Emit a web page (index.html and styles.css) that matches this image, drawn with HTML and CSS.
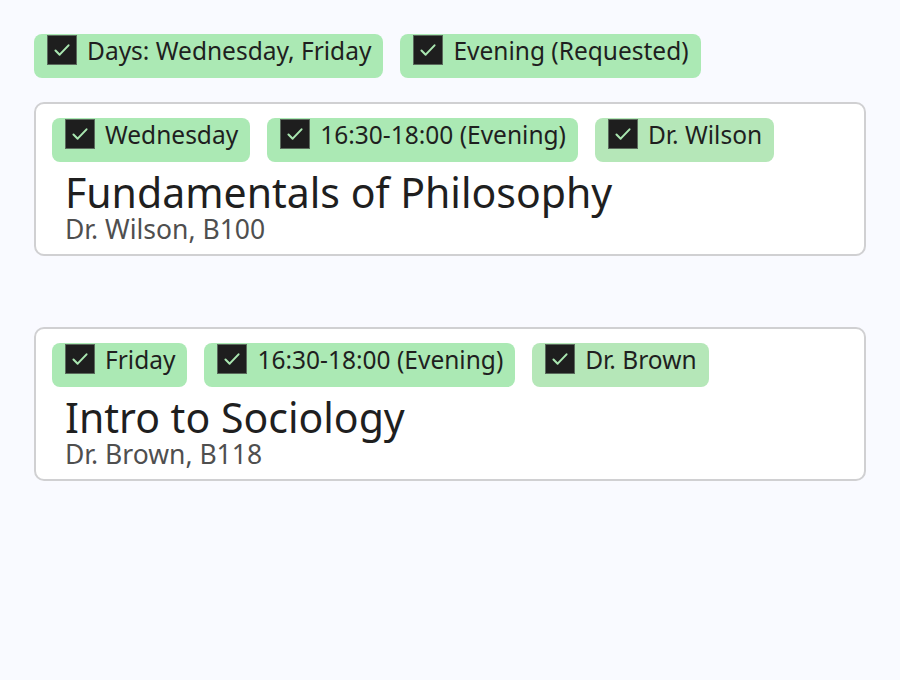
FILE: index.html
```html
<!DOCTYPE html>
<html>
<head>
<meta charset="utf-8">
<link rel="stylesheet" href="styles.css">
</head>
<body>
<div class="page">
  <div class="chips top">
    <label class="chip"><span class="box"><svg viewBox="0 0 30 30"><path d="M8 15.5l4.5 4.5 9.5-10" /></svg></span><span class="txt">Days: Wednesday, Friday</span></label>
    <label class="chip"><span class="box"><svg viewBox="0 0 30 30"><path d="M8 15.5l4.5 4.5 9.5-10" /></svg></span><span class="txt">Evening (Requested)</span></label>
  </div>
  <div class="card">
    <div class="chips">
      <label class="chip"><span class="box"><svg viewBox="0 0 30 30"><path d="M8 15.5l4.5 4.5 9.5-10" /></svg></span><span class="txt">Wednesday</span></label>
      <label class="chip"><span class="box"><svg viewBox="0 0 30 30"><path d="M8 15.5l4.5 4.5 9.5-10" /></svg></span><span class="txt">16:30-18:00 (Evening)</span></label>
      <label class="chip light"><span class="box"><svg viewBox="0 0 30 30"><path d="M8 15.5l4.5 4.5 9.5-10" /></svg></span><span class="txt">Dr. Wilson</span></label>
    </div>
    <div class="title">Fundamentals of Philosophy</div>
    <div class="sub">Dr. Wilson, B100</div>
  </div>
  <div class="card">
    <div class="chips">
      <label class="chip"><span class="box"><svg viewBox="0 0 30 30"><path d="M8 15.5l4.5 4.5 9.5-10" /></svg></span><span class="txt">Friday</span></label>
      <label class="chip"><span class="box"><svg viewBox="0 0 30 30"><path d="M8 15.5l4.5 4.5 9.5-10" /></svg></span><span class="txt">16:30-18:00 (Evening)</span></label>
      <label class="chip light"><span class="box"><svg viewBox="0 0 30 30"><path d="M8 15.5l4.5 4.5 9.5-10" /></svg></span><span class="txt">Dr. Brown</span></label>
    </div>
    <div class="title">Intro to Sociology</div>
    <div class="sub">Dr. Brown, B118</div>
  </div>
</div>
</body>
</html>
```
FILE: styles.css
```css
html, body {
  margin: 0;
  padding: 0;
  background: #f9faff;
}
body {
  font-family: "Noto Sans", "Open Sans", sans-serif;
  color: #1f1f1f;
}
.page {
  padding: 34px 34px;
  display: flex;
  flex-direction: column;
  align-items: stretch;
}
.chips {
  display: flex;
  gap: 17px;
}
.chips.top {
  margin-bottom: 24px;
}
.chip {
  display: flex;
  align-items: flex-start;
  gap: 10px;
  background: #abe9b4;
  border-radius: 8px;
  padding: 1px 12px 0 13px;
  height: 44px;
  box-sizing: border-box;
}
.chip.light {
  background: #b5e7b8;
}
.box {
  width: 30px;
  height: 30px;
  box-sizing: border-box;
  background: #1e1e1e;
  border: 1px solid #5a6a5c;
  flex: none;
}
.box svg {
  display: block;
  width: 28px;
  height: 28px;
}
.box path {
  fill: none;
  stroke: #a9e6b0;
  stroke-width: 2.2;
  stroke-linecap: round;
  stroke-linejoin: round;
}
.txt {
  font-size: 24.5px;
  line-height: 32px;
  white-space: nowrap;
}
.card {
  background: #fff;
  border: 2px solid #d0d0d2;
  border-radius: 10px;
  padding: 14px 16px 12px;
  margin-bottom: 71px;
}
.title {
  font-size: 41px;
  line-height: 48px;
  padding-left: 13px;
  margin-top: 6px;
}
.sub {
  font-size: 26.5px;
  line-height: 26px;
  color: #4f4f4f;
  padding-left: 13px;
}
```
